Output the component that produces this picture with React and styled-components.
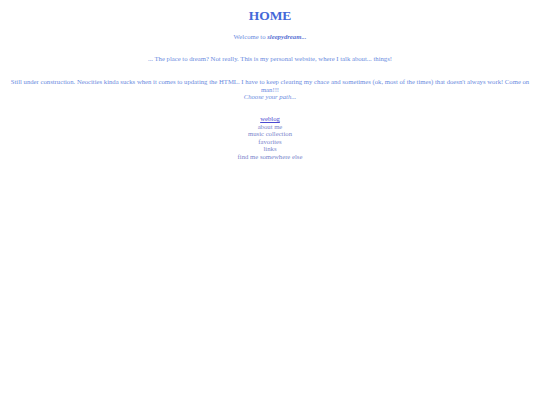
import React from "react";
import styled, { createGlobalStyle } from "styled-components";

const Global = createGlobalStyle`
  body {
    margin: 8px;
    background: #ffffff;
    font-family: "Liberation Serif", "Times New Roman", serif;
  }
`;

const Page = styled.div`
  display: flex;
  flex-direction: column;
  align-items: stretch;
  text-align: center;
  color: #6b8be0;
  font-size: 6.7px;
  line-height: 7.5px;
`;

const Title = styled.h1`
  margin: 0;
  font-size: 13.5px;
  line-height: 16px;
  font-weight: bold;
  color: #4468d8;
`;

const Line = styled.p`
  margin: ${({ gap }) => gap}px 0 0;
`;

const Name = styled.em`
  font-weight: bold;
  color: #5a72d4;
`;

const Choose = styled.em`
  display: block;
`;

const Nav = styled.nav`
  display: flex;
  flex-direction: column;
  align-items: center;
  margin-top: 14.5px;
`;

const NavLink = styled.a`
  color: ${({ active }) => (active ? "#4b4bd0" : "#7a86cc")};
  text-decoration: ${({ active }) => (active ? "underline" : "none")};
`;

const links = [
  "weblog",
  "about me",
  "music collection",
  "favorites",
  "links",
  "find me somewhere else",
];

export default function App() {
  return (
    <>
      <Global />
      <Page>
        <Title>HOME</Title>
        <Line gap={9}>
          Welcome to <Name>sleepydream...</Name>
        </Line>
        <Line gap={14.5}>
          ... The place to dream? Not really. This is my personal website, where I talk about... things!
        </Line>
        <Line gap={15.5}>
          Still under construction. Neocities kinda sucks when it comes to updating the HTML. I have to keep clearing my chace and sometimes (ok, most of the times) that doesn't always work! Come on man!!!
          <Choose>Choose your path...</Choose>
        </Line>
        <Nav>
          {links.map((l, i) => (
            <NavLink key={l} href="#" active={i === 0}>
              {l}
            </NavLink>
          ))}
        </Nav>
      </Page>
    </>
  );
}
